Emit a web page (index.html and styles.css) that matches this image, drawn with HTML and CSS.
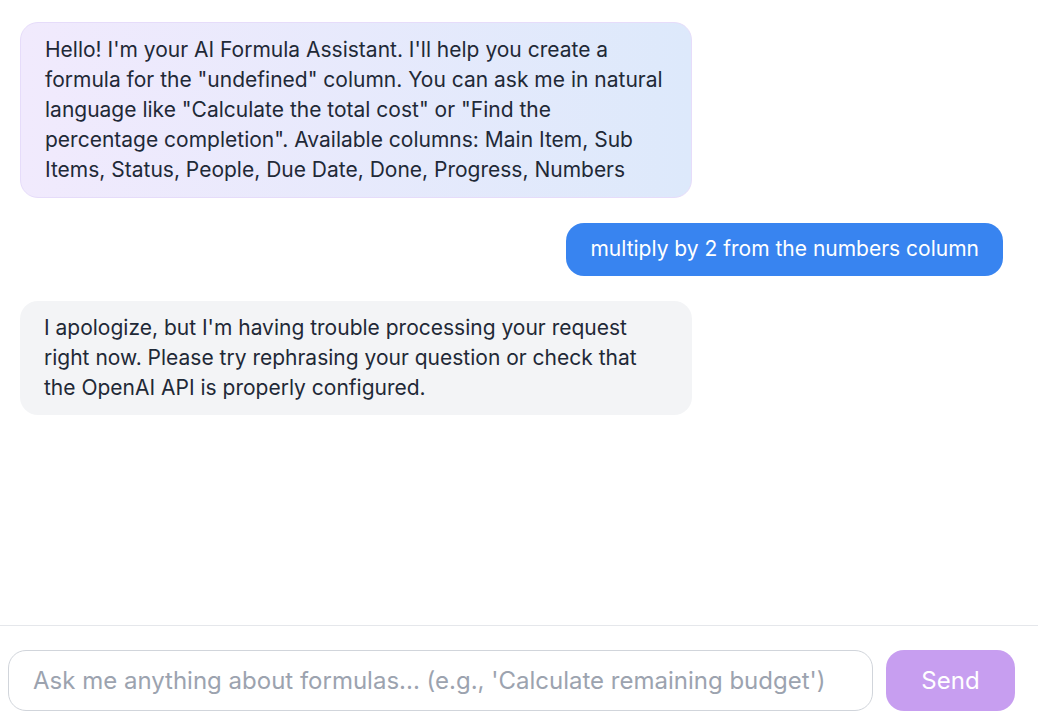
FILE: index.html
```html
<!DOCTYPE html>
<html lang="en">
<head>
<meta charset="utf-8">
<link rel="stylesheet" href="styles.css">
</head>
<body>
<div class="chat">
  <div class="messages">
    <div class="msg assistant intro">Hello! I'm your AI Formula Assistant. I'll help you create a formula for the "undefined" column. You can ask me in natural language like "Calculate the total cost" or "Find the percentage completion". Available columns: Main Item, Sub Items, Status, People, Due Date, Done, Progress, Numbers</div>
    <div class="msg user">multiply by 2 from the numbers column</div>
    <div class="msg assistant">I apologize, but I'm having trouble processing your request right now. Please try rephrasing your question or check that the OpenAI API is properly configured.</div>
  </div>
  <div class="composer">
    <input class="prompt" type="text" placeholder="Ask me anything about formulas... (e.g., 'Calculate remaining budget')">
    <button class="send">Send</button>
  </div>
</div>
</body>
</html>
```
FILE: styles.css
```css
html, body {
  margin: 0;
  padding: 0;
  background: #ffffff;
}
body {
  font-family: Inter, "Noto Sans", sans-serif;
  color: #1f2937;
}
.chat {
  height: 718px;
  display: flex;
  flex-direction: column;
  overflow: hidden;
}
.messages {
  flex: 1;
  display: flex;
  flex-direction: column;
  gap: 25px;
  padding: 22px 35px 0 20px;
}
.msg {
  box-sizing: border-box;
  max-width: 672px;
  padding: 12px 24px;
  font-size: 21px;
  line-height: 30px;
  border-radius: 18px;
}
.assistant {
  align-self: flex-start;
  background: #f3f4f6;
}
.intro {
  padding: 12px 24px;
  background: linear-gradient(90deg, #f1eafd 0%, #dde9fb 100%);
  border: 1px solid #e6dcfa;
}
.user {
  align-self: flex-end;
  padding: 11px 24px 12px;
  background: #3884f0;
  color: #ffffff;
}
.composer {
  border-top: 1px solid #e5e7eb;
  display: flex;
  align-items: center;
  gap: 13px;
  padding: 24px 23px 7px 8px;
}
.prompt {
  flex: 1;
  box-sizing: border-box;
  height: 61px;
  border: 1px solid #d1d5db;
  border-radius: 18px;
  padding: 0 24px;
  font-family: Inter, "Noto Sans", sans-serif;
  font-size: 24px;
  color: #1f2937;
  outline: none;
  background: #ffffff;
}
.prompt::placeholder {
  color: #9ca3af;
}
.send {
  box-sizing: border-box;
  width: 129px;
  height: 61px;
  border: none;
  border-radius: 18px;
  background: #c79ef0;
  color: #ffffff;
  font-family: Inter, "Noto Sans", sans-serif;
  font-size: 24px;
}
```
